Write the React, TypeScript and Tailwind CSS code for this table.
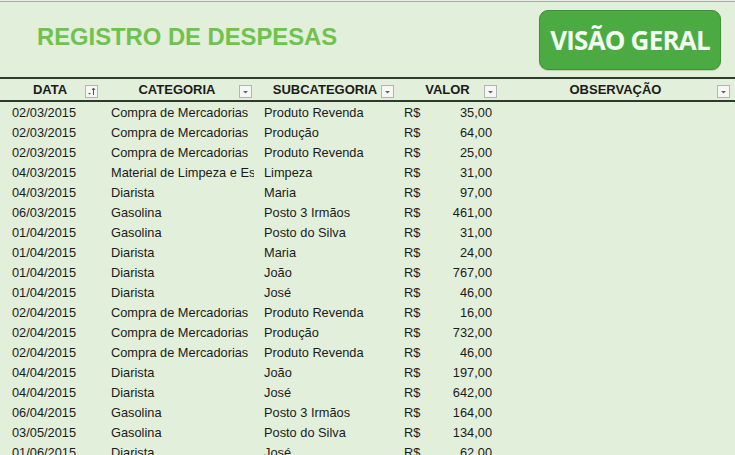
import React from "react";

const rows: [string, string, string, string][] = [
  ["02/03/2015", "Compra de Mercadorias", "Produto Revenda", "35,00"],
  ["02/03/2015", "Compra de Mercadorias", "Produção", "64,00"],
  ["02/03/2015", "Compra de Mercadorias", "Produto Revenda", "25,00"],
  ["04/03/2015", "Material de Limpeza e Escritório", "Limpeza", "31,00"],
  ["04/03/2015", "Diarista", "Maria", "97,00"],
  ["06/03/2015", "Gasolina", "Posto 3 Irmãos", "461,00"],
  ["01/04/2015", "Gasolina", "Posto do Silva", "31,00"],
  ["01/04/2015", "Diarista", "Maria", "24,00"],
  ["01/04/2015", "Diarista", "João", "767,00"],
  ["01/04/2015", "Diarista", "José", "46,00"],
  ["02/04/2015", "Compra de Mercadorias", "Produto Revenda", "16,00"],
  ["02/04/2015", "Compra de Mercadorias", "Produção", "732,00"],
  ["02/04/2015", "Compra de Mercadorias", "Produto Revenda", "46,00"],
  ["04/04/2015", "Diarista", "João", "197,00"],
  ["04/04/2015", "Diarista", "José", "642,00"],
  ["06/04/2015", "Gasolina", "Posto 3 Irmãos", "164,00"],
  ["03/05/2015", "Gasolina", "Posto do Silva", "134,00"],
  ["01/06/2015", "Diarista", "José", "62,00"],
];

function FilterBtn({ sorted }: { sorted?: boolean }) {
  return (
    <span className="absolute right-[2px] top-[6px] w-[13px] h-[13px] bg-[#f6f6f6] border border-[#b4b4b4] flex items-center justify-center">
      <svg width="11" height="11" viewBox="0 0 11 11">
        {sorted ? (
          <>
            <path d="M2 7 L5 7 L3.5 8.5 Z" fill="#555" />
            <path d="M7.5 9 L7.5 2.5" stroke="#555" strokeWidth="1" />
            <path d="M6 4 L7.5 2 L9 4" stroke="#555" strokeWidth="1" fill="none" />
          </>
        ) : (
          <path d="M3 5 L8 5 L5.5 7.5 Z" fill="#666" />
        )}
      </svg>
    </span>
  );
}

const cols = "grid grid-cols-[100px_154px_142px_103px_233px]";

export default function App() {
  return (
    <div className="w-[735px] h-[455px] overflow-hidden bg-[#e2efda] font-['Liberation_Sans',Arial,sans-serif] text-[#1b1b1b]">
      <div className="h-[2px] border-b border-[#a9aca8] bg-[#e8ece6]" />
      <div className="flex h-[75px]">
        <div className="pl-[37px] pt-[23px] text-[23.8px] font-bold text-[#6fc24f] leading-none">
          REGISTRO DE DESPESAS
        </div>
        <div className="ml-auto mr-[14px] mt-[8px] w-[182px] h-[60px] rounded-[9px] bg-[#4caa42] border border-[#3e9136] flex items-center justify-center shadow-[0_1px_1px_rgba(0,0,0,0.15)]">
          <span className="text-[26px] font-bold text-[#f1fbef] font-['Open_Sans',sans-serif] tracking-[-0.8px] leading-none">
            VISÃO GERAL
          </span>
        </div>
      </div>
      <div className={`${cols} h-[25px] border-t-2 border-b-2 border-[#2e3a2c] text-[13px] font-bold`}>
        <div className="relative flex items-center justify-center">DATA<FilterBtn sorted /></div>
        <div className="relative flex items-center justify-center">CATEGORIA<FilterBtn /></div>
        <div className="relative flex items-center justify-center">SUBCATEGORIA<FilterBtn /></div>
        <div className="relative flex items-center justify-center">VALOR<FilterBtn /></div>
        <div className="relative flex items-center justify-center">OBSERVAÇÃO<FilterBtn /></div>
      </div>
      <div className="text-[12.8px] pt-[1px]">
        {rows.map((r, i) => (
          <div key={i} className={`${cols} h-[20px] items-center`}>
            <div className="pl-[12px]">{r[0]}</div>
            <div className="pl-[11px] pr-[4px] overflow-hidden whitespace-nowrap">{r[1]}</div>
            <div className="pl-[10px] whitespace-nowrap">{r[2]}</div>
            <div className="flex pl-[8px] pr-[7px]">
              <span>R$</span>
              <span className="ml-auto">{r[3]}</span>
            </div>
            <div />
          </div>
        ))}
      </div>
    </div>
  );
}
